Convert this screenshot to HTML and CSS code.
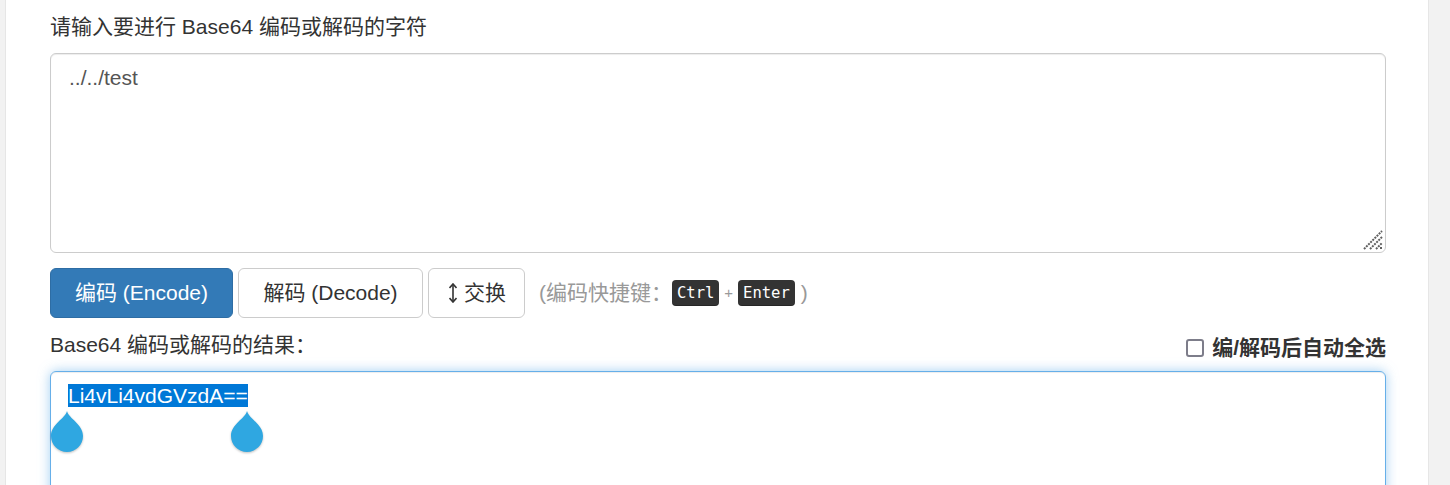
FILE: index.html
```html
<!DOCTYPE html>
<html lang="zh-CN">
<head>
<meta charset="utf-8">
<title>Base64 编码解码</title>
<link rel="stylesheet" href="styles.css">
</head>
<body>
<div class="page">
  <div class="panel">
    <label class="lbl">请输入要进行 Base64 编码或解码的字符</label>
    <div class="input-wrap">
      <textarea class="src">../../test</textarea>
      <svg class="grip" width="22" height="22" viewBox="0 0 22 22">
        <g stroke="#5f5f5f" stroke-width="2" stroke-dasharray="2 1">
          <line x1="2" y1="20" x2="20" y2="2"/>
          <line x1="8" y1="20" x2="20" y2="8"/>
          <line x1="14" y1="20" x2="20" y2="14"/>
        </g>
        <rect x="18" y="18" width="2" height="2" fill="#5f5f5f"/>
      </svg>
    </div>
    <div class="actions">
      <button class="btn btn-primary">编码 (Encode)</button>
      <button class="btn btn-decode">解码 (Decode)</button>
      <button class="btn btn-swap">
        <svg class="swap-ic" width="8" height="20" viewBox="0 0 8 20">
          <path d="M4 1.5V18.5" stroke="#333" stroke-width="1.6" fill="none"/>
          <path d="M0.5 5L4 1L7.5 5M0.5 15L4 19L7.5 15" stroke="#333" stroke-width="1.6" fill="none"/>
        </svg>交换</button>
      <span class="hint">(编码快捷键：<kbd>Ctrl</kbd><span class="plus">+</span><kbd>Enter</kbd><span class="close">)</span></span>
    </div>
    <div class="result-head">
      <span class="lbl2">Base64 编码或解码的结果：</span>
      <label class="auto"><span class="box"></span>编/解码后自动全选</label>
    </div>
    <div class="out">
      <span class="sel">Li4vLi4vdGVzdA==</span>
      <svg class="handle handle-l" width="34" height="44" viewBox="0 0 34 44">
        <path d="M17 1 C19 9, 33 14, 33 26 A16 16 0 1 1 1 26 C1 14, 15 9, 17 1 Z" fill="#2fa7e1"/>
      </svg>
      <svg class="handle handle-r" width="34" height="44" viewBox="0 0 34 44">
        <path d="M17 1 C19 9, 33 14, 33 26 A16 16 0 1 1 1 26 C1 14, 15 9, 17 1 Z" fill="#2fa7e1"/>
      </svg>
    </div>
  </div>
</div>
</body>
</html>
```
FILE: styles.css
```css
html, body {
  margin: 0;
  padding: 0;
  height: 485px;
  overflow: hidden;
  background: #f2f2f2;
}
body {
  font-family: "Liberation Sans", "Noto Sans CJK SC", sans-serif;
  font-size: 21px;
  line-height: 30px;
  color: #333;
}
.page {
  padding: 0 21px 0 5px;
  height: 485px;
}
.panel {
  background: #fff;
  border-left: 1px solid #e6e6e6;
  border-right: 1px solid #e6e6e6;
  height: 485px;
  padding: 12px 42px 0 44px;
  box-sizing: border-box;
  overflow: hidden;
}
.lbl {
  display: block;
  margin-bottom: 11px;
}
.input-wrap {
  position: relative;
}
.src {
  display: block;
  width: 100%;
  height: 200px;
  box-sizing: border-box;
  border: 1px solid #ccc;
  border-radius: 6px;
  padding: 9px 18px;
  font: inherit;
  color: #555;
  resize: none;
  box-shadow: inset 0 1px 1px rgba(0,0,0,.075);
  outline: none;
}
.grip {
  position: absolute;
  right: 2px;
  bottom: 2px;
}
.actions {
  display: flex;
  align-items: center;
  margin-top: 15px;
  gap: 5px;
}
.btn {
  font: inherit;
  color: #333;
  background: #fff;
  border: 1px solid #ccc;
  border-radius: 6px;
  padding: 9px 18px;
  height: 50px;
  box-sizing: border-box;
  display: inline-flex;
  align-items: center;
  cursor: pointer;
}
.btn-primary {
  background: #337ab7;
  border-color: #2e6da4;
  color: #fff;
  width: 183px;
  justify-content: center;
}
.btn-decode {
  width: 185px;
  justify-content: center;
}
.btn-swap {
  width: 97px;
  padding: 9px 14px 9px 20px;
}
.swap-ic {
  margin-right: 7px;
}
.hint {
  color: #999;
  margin-left: 9px;
  font-size: 21px;
  display: inline-flex;
  align-items: center;
}
kbd {
  font-family: "DejaVu Sans Mono", "Liberation Mono", monospace;
  font-size: 15.5px;
  line-height: 20px;
  background: #333;
  color: #fff;
  border-radius: 4px;
  padding: 3px 5px;
  box-shadow: inset 0 -1px 0 rgba(0,0,0,.25);
}
.plus {
  font-size: 15px;
  margin: 0 5px;
}
.close {
  margin-left: 6px;
}
.result-head {
  display: flex;
  justify-content: space-between;
  align-items: center;
  margin-top: 9px;
  margin-bottom: 8px;
}
.auto {
  font-weight: bold;
  display: flex;
  align-items: center;
  margin-top: 6px;
}
.box {
  flex: none;
  box-sizing: border-box;
  width: 18px;
  height: 18px;
  border: 2.5px solid #7d7d8a;
  border-radius: 3px;
  margin-right: 8px;
}
.out {
  position: relative;
  height: 160px;
  border: 1px solid #66afe9;
  border-radius: 6px;
  padding: 9px 17px;
  box-shadow: inset 0 1px 1px rgba(0,0,0,.075), 0 0 12px rgba(102,175,233,.6);
  color: #555;
}
.sel {
  background: #0078d7;
  color: #fff;
  line-height: 23px;
  display: inline-block;
  margin-top: 3px;
}
.handle {
  position: absolute;
  top: 38px;
  filter: drop-shadow(0 1px 1px rgba(0,0,0,.25));
}
.handle-l {
  left: -1px;
}
.handle-r {
  left: 179px;
}
```
